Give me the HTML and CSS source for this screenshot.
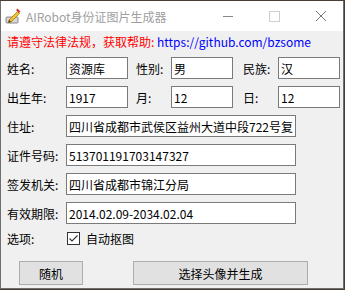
FILE: index.html
```html
<!DOCTYPE html>
<html lang="zh-CN">
<head>
  <meta charset="UTF-8">
  <title>AIRobot身份证图片生成器</title>
  <link rel="stylesheet" href="styles.css">
</head>
<body>
  <div class="window">
    <div class="titlebar">
      <svg class="app-icon" width="16" height="16" viewBox="0 0 16 16">
        <rect x="1" y="9" width="12" height="6" rx="1" fill="#d8d8d8" stroke="#8a8a8a"/>
        <path d="M4 12 L12.5 3.5 L14.5 5.5 L6 14 L3.5 14.5 Z" fill="#f2c230" stroke="#9a7a10" stroke-width="0.8"/>
        <path d="M11 2 L12.5 0.5 L15.5 3.5 L14 5 Z" fill="#d23b3b"/>
        <path d="M3.5 14.5 L4 12 L6 14 Z" fill="#333"/>
      </svg>
      <span class="title">AIRobot身份证图片生成器</span>
      <div class="controls">
        <span class="ctl min"></span>
        <span class="ctl max"></span>
        <svg class="ctl close" width="12" height="12" viewBox="0 0 12 12">
          <path d="M1 1 L11 11 M11 1 L1 11" stroke="#777" stroke-width="1"/>
        </svg>
      </div>
    </div>
    <div class="client">
      <p class="notice"><span class="warn">请遵守法律法规，获取帮助:</span> <span class="link">https://github.com/bzsome</span></p>

      <div class="row">
        <label class="lbl">姓名:</label>
        <input class="field short" value="资源库">
        <label class="lbl mid">性别:</label>
        <input class="field short" value="男">
        <label class="lbl mid2">民族:</label>
        <input class="field short" value="汉">
      </div>
      <div class="row">
        <label class="lbl">出生年:</label>
        <input class="field short" value="1917">
        <label class="lbl mid">月:</label>
        <input class="field short" value="12">
        <label class="lbl mid2">日:</label>
        <input class="field short" value="12">
      </div>
      <div class="row">
        <label class="lbl">住址:</label>
        <input class="field long" value="四川省成都市武侯区益州大道中段722号复">
      </div>
      <div class="row">
        <label class="lbl">证件号码:</label>
        <input class="field long" value="513701191703147327">
      </div>
      <div class="row">
        <label class="lbl">签发机关:</label>
        <input class="field long" value="四川省成都市锦江分局">
      </div>
      <div class="row">
        <label class="lbl">有效期限:</label>
        <input class="field long" value="2014.02.09-2034.02.04">
      </div>
      <div class="row options">
        <label class="lbl">选项:</label>
        <span class="check">
          <svg width="13" height="13" viewBox="0 0 13 13">
            <rect x="0.5" y="0.5" width="12" height="12" fill="#fff" stroke="#333"/>
            <path d="M2.5 6.5 L5 9 L10.5 3.5" fill="none" stroke="#333" stroke-width="1.1"/>
          </svg>
          自动抠图
        </span>
      </div>
      <div class="actions">
        <button class="btn random">随机</button>
        <button class="btn generate">选择头像并生成</button>
      </div>
    </div>
  </div>
</body>
</html>
```

FILE: styles.css
```css
body {
  margin: 0;
  background: #4a3d33;
  font-family: "Noto Sans CJK SC", "Noto Sans", sans-serif;
  font-size: 12px;
}
.window {
  width: 342px;
  height: 287px;
  margin-top: 1px;
  border: 1px solid #6f6f6f;
  border-top: none;
  background: #f0f0f0;
  overflow: hidden;
}
.titlebar {
  height: 30px;
  background: #fff;
  display: flex;
  align-items: center;
  padding-left: 4px;
}
.app-icon {
  margin-right: 5px;
}
.title {
  color: #a0a0a0;
  font-size: 12px;
  flex: 1;
}
.controls {
  display: flex;
  align-items: center;
}
.ctl {
  display: block;
}
.min {
  width: 10px;
  height: 1px;
  background: #888;
  margin-right: 36px;
}
.max {
  width: 9px;
  height: 9px;
  border: 1px solid #cfcfcf;
  margin-right: 35px;
}
.close {
  margin-right: 16px;
}
.client {
  padding: 0 0 0 6px;
}
.notice {
  margin: 0;
  height: 25px;
  line-height: 20px;
  padding-top: 1px;
  font-size: 12px;
}
.warn {
  color: #ff0000;
}
.link {
  color: #0000ff;
}
.row {
  display: flex;
  align-items: center;
  height: 22px;
  margin-bottom: 7px;
}
.lbl {
  width: 59px;
  color: #000;
}
.lbl.mid {
  width: 43px;
  padding-left: 8px;
  box-sizing: border-box;
}
.lbl.mid2 {
  width: 45px;
  padding-left: 10px;
  box-sizing: border-box;
}
.field {
  box-sizing: border-box;
  height: 22px;
  border: 1px solid #7a7a7a;
  background: #fff;
  padding: 0 2px;
  margin: 0;
  font-family: inherit;
  font-size: 12px;
  color: #000;
  outline: none;
}
.field.short {
  width: 62px;
}
.field.long {
  width: 230px;
}
.options {
  margin-top: 6px;
  height: 15px;
}
.check {
  display: flex;
  align-items: center;
  gap: 6px;
  margin-left: 1px;
}
.check svg {
  display: block;
}
.actions {
  display: flex;
  margin-top: 15px;
  padding-left: 12px;
}
.btn {
  height: 24px;
  background: #e1e1e1;
  border: 1px solid #adadad;
  font-family: inherit;
  font-size: 12px;
  color: #000;
  padding: 0;
}
.random {
  width: 64px;
  margin-right: 50px;
}
.generate {
  width: 175px;
}
```
